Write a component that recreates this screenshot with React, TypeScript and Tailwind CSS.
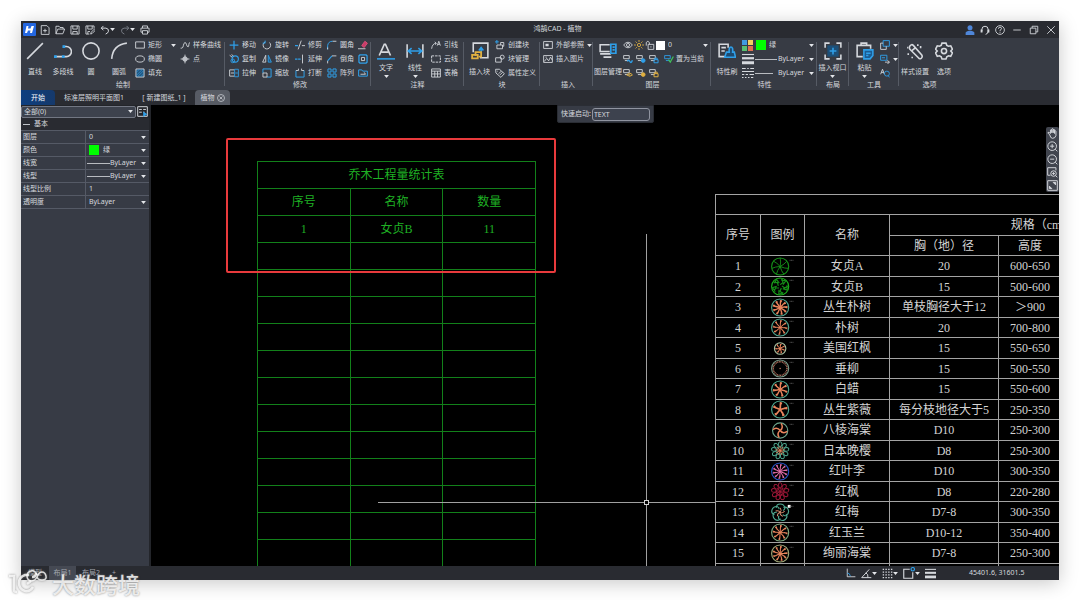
import type { ReactNode } from 'react';
import clsx from 'clsx';

const W = '#d6d9de';
const B = '#2f9fe8';
const Y = '#e0b040';

const CJK = 'font-[Noto_Sans,Noto_Sans_CJK_SC,sans-serif]';
const CAD = 'font-[Liberation_Serif,Noto_Sans_CJK_SC,serif]';

function Svg({ size = 'size-[10px]', children }: { size?: string; children: ReactNode }) {
  return (
    <svg viewBox="0 0 16 16" className={clsx('shrink-0', size)} fill="none" stroke={W} strokeWidth="1.4" aria-hidden="true">
      {children}
    </svg>
  );
}

function Caret() {
  return (
    <svg viewBox="0 0 8 5" className="w-[5px] h-[3px] shrink-0" aria-hidden="true">
      <path d="M0 0h8L4 5z" fill="#e4e6ea" />
    </svg>
  );
}

// stacked-layer glyph shared by the layer tools, with a badge in the corner
function LayerGlyph({ color, badge }: { color: string; badge: 'wave' | 'sun' | 'lock' | 'eye' | 'check' }) {
  return (
    <Svg>
      <path d="M1 2.500h9v5h-9zM3 10.500h6" stroke={badge === 'check' ? B : W} />
      {badge === 'wave' && <path d="M7 12q2-4 4 0t4-2" stroke={color} strokeWidth="2.200" />}
      {badge === 'sun' && <circle cx="11.500" cy="10.500" r="3" fill={color} stroke={color} />}
      {badge === 'lock' && <path d="M8 9h6.500v5H8zM9.500 9V6.500h3.500V9" stroke={color} strokeWidth="1.600" />}
      {badge === 'eye' && <path d="M6 11q5-5 9 0q-4 4.500-9 0zM10.500 10v2" stroke={color} strokeWidth="1.600" />}
      {badge === 'check' && <path d="M7 9l3 4 5-9" stroke="#3fc25a" strokeWidth="2" />}
    </Svg>
  );
}

const icons: Record<string, ReactNode> = {
  // quick access
  newFile: <path d="M2 1h9l3.500 3.500V15H2zM5 9h6M8 6v6" />,
  open: <path d="M1.500 14V2h5l1.500 2h5v2.500M1.500 14l3-7.500h11L12.500 14z" />,
  save: <path d="M1.500 1.500h13v13h-13zM4.500 1.500v5h7v-5M4.500 14.500v-4h7v4" />,
  saveAs: <path d="M14.500 6V1.500h-13v13H7M4.500 1.500v5h7v-5M4.500 14.500v-4H8M9 14.500l1-3 4.500-4.500 1.500 2-4.500 4.500z" />,
  undo: <path d="M5.500 1.500L2 5l3.500 3.500M2 5h7.500q5 1 4 5-.5 3-4.500 4.500" strokeWidth="1.600" />,
  redo: <path d="M10.500 1.500L14 5l-3.500 3.500M14 5H6.500q-5 1-4 5 .5 3 4.500 4.500" stroke="#777b84" strokeWidth="1.600" />,
  print: <path d="M4 5V1.500h8V5M4 11.500H1.500V5h13v6.500H12M4 9h8v5.500H4z" />,
  // draw
  line: <path d="M1 15L15 1" />,
  polyline: <><path d="M1 13h10a4.500 4.500 0 0 0 0-9H8" /><path d="M0 11.800h2.500v2.500H0zM7 11.800h2.500v2.500H7zM7.500 2.800H10v2.500H7.500z" fill={B} stroke="none" /></>,
  circle: <circle cx="8" cy="8" r="7.200" />,
  arc: <path d="M1.500 15Q2.500 2.500 15 1" />,
  rect: <path d="M1 3h14v10H1z" />,
  ellipse: <ellipse cx="8" cy="8" rx="7" ry="5" />,
  hatch: <><path d="M1.500 1.500h13v13h-13z" fill="#24577f" /><path d="M2 7l5-5M2 12L12 2M4 14L14 4M9 14l5-5" stroke={B} strokeWidth="1" /></>,
  spline: <path d="M1 13h2C6 13 5 4 8 4s2 7 5 7c2 0 0-7 3-7" />,
  point: <><circle cx="8" cy="8" r="3.500" fill="#8b8f98" /><path d="M8 1v14M1 8h14" /></>,
  // modify
  move: <path d="M8 1v14M1 8h14" stroke={B} strokeWidth="2" />,
  rotate: <><path d="M5 3a6 6 0 1 0 7 1" /><path d="M5 1v4H1" stroke={B} strokeWidth="1.600" /></>,
  trim: <><path d="M0 9h5" stroke={B} strokeWidth="2" /><path d="M10 1L5 15M11 9h5" /></>,
  fillet: <><path d="M1 15V9Q2 2 9 2" stroke={B} strokeWidth="1.600" /><path d="M9 2h6M1 15v-3" /></>,
  erase: <><path d="M6 9l5-7 4 3-5 7z" fill="#c83c68" stroke="#e0507c" /><path d="M0 14h12" /></>,
  copy: <><circle cx="10" cy="8" r="5" stroke={B} strokeWidth="1.800" /><circle cx="6" cy="11" r="3" stroke={B} /><path d="M1 2l4 3M4 1l3 2" /></>,
  mirror: <><path d="M6 2v11H1z" /><path d="M10 2v11h5z" stroke={B} fill="#24577f" /></>,
  extend: <><path d="M0 8h9" stroke={B} strokeWidth="2" strokeDasharray="4 1" /><path d="M12 1v14" /></>,
  chamfer: <><path d="M1 11L8 3" stroke={B} strokeWidth="1.800" /><path d="M8 3h7M1 15v-4" /></>,
  offset: <><path d="M3 1.500h10l1.500 1.500v10L13 14.500H3L1.500 13V3z" stroke={B} strokeWidth="2" /><path d="M5.500 5.500h5v5h-5z" /></>,
  stretch: <><path d="M9 3H1v10h8M3 8h5" /><path d="M9 2h6v12H9zM10 8h4" stroke={B} /></>,
  scale: <><path d="M1.500 8V1.500h13v13H8" stroke={B} strokeWidth="1.600" /><path d="M1.500 8h6.500v6.500H1.500z" /></>,
  breakAt: <><path d="M1.500 4v10.500h13V4" stroke={B} strokeWidth="1.600" /><path d="M1.500 4h4M10.500 4h4M5.500 1v3M10.500 1v3" /></>,
  array: <path d="M1.500 1.500h5v5h-5zM9.500 1.500h5v5h-5zM1.500 9.500h5v5h-5zM9.500 9.500h5v5h-5z" stroke={B} strokeWidth="1.600" />,
  group: <><path d="M1 13V3h5l1.500 2H15v8z" stroke={B} strokeWidth="1.600" /><path d="M4 10h8l-2-3" /></>,
  // annotate
  text: <><path d="M2 12L6.500 2h1L12 12M4 9h6" strokeWidth="1.500" /><path d="M0 15h16" stroke={B} /></>,
  linear: <><path d="M1 2v12M15 2v12" /><path d="M2 8h12M5 5.500L2 8l3 2.500M11 5.500L14 8l-3 2.500" stroke={B} /></>,
  leader: <><path d="M1 14Q2 6 8 5M6 3l2.500 2L7 7.500" /><path d="M10 9l2.500-7L15 9M11 7h3" /></>,
  cloud: <path d="M1 3h14v10H1z" strokeDasharray="4 1.500" strokeWidth="1.500" />,
  table: <path d="M1 1.500h14v13H1zM1 5h14M1 9.500h14M6 5v9.500M10.500 5v9.500" />,
  // block
  insertBlock: <><path d="M8 14h7V1H2v8" /><path d="M9 10V5M7 7.500L9 5l2 2.500" stroke={B} /><path d="M1 11.500h5v3H1zM4 12.500V9h5v4H7" stroke={Y} strokeWidth="1.600" /></>,
  makeBlock: <><path d="M3 0v6M0 3h6" stroke={B} strokeWidth="1.600" /><path d="M3 8v6h9V8zM9 8V4h5v6h-2" /></>,
  manageBlock: <><path d="M1 6h9v7H1z" /><circle cx="11.500" cy="5" r="3.200" /></>,
  tag: <path d="M1 2h6l8 7-5.500 6L1.500 8zM4 4.500v1M6 9l4-4M8 11l4-4" />,
  xref: <><path d="M1 2.500h14v11H1z" /><path d="M4 6h5v4H4z" fill={W} stroke="none" /></>,
  image: <path d="M1 2.500h14v11H1zM2 12l4-5 3 4 3-6 3 5M4 5h2" />,
  // layer
  layers: <><path d="M9.500 2.500H1v6h8.500" /><path d="M1 10.500h9.500M4 13.500h7" strokeWidth="1.600" /><path d="M10.500 2H15v8h-4.500zM12 4.500h2M12 7h2" stroke={B} strokeWidth="1.500" /></>,
  eye: <><path d="M1 8q7-9 14 0q-7 9-14 0z" /><circle cx="8" cy="8" r="2.500" /></>,
  sun: <><circle cx="8" cy="8" r="2.600" stroke={Y} /><path d="M8 0v3M8 13v3M0 8h3M13 8h3M2.500 2.500l2 2M11.500 11.500l2 2M13.500 2.500l-2 2M2.500 13.500l2-2" stroke={Y} /></>,
  unlock: <path d="M5 7h9v8H5zM2 9V4q2.500-4 5 0v3M9.500 10v2" />,
  // properties
  match: <><path d="M7 13H1V2h8v3M3 5h4M3 8h3" /><path d="M6 13.500l1.500-4.500H10q-.5-4.500 1.500-4.500T13 9h1.500l1 4.500z" stroke={B} fill="#1d4a70" /></>,
  weights: <><path d="M0 2h16" strokeWidth="1.500" /><path d="M0 7h16" strokeWidth="3" /><path d="M0 13h16" strokeWidth="4" /></>,
  types: <path d="M0 2h5M7 2h2M11 2h5M0 6h16M0 10h3M5 10h3M10 10h6M0 14h2M4 14h2M8 14h2M12 14h3" strokeWidth="1.500" />,
  // layout + tools
  viewport: <><path d="M3 3h10v10H3z" fill="#1c4f78" stroke="none" /><path d="M1 5V1h4M11 1h4v4M15 11v4h-4M5 15H1v-4" /><path d="M8 5v6M5 8h6" stroke={B} /></>,
  paste: <><path d="M6 13H1V3h12v3M4.500 3V1h5v2" /><path d="M7 7h8v5l-2.500 3H7zM9 10h4M9 12h2" stroke={B} fill="#1b5c92" /></>,
  duplicate: <><path d="M5 1h10v9H5z" stroke={B} strokeWidth="1.500" /><path d="M5 5H1v10h9v-5" /></>,
  quickCopy: <><path d="M1 2h10v8H1zM3 6h5" stroke={B} strokeWidth="1.500" /><path d="M8 13h7M12 10l3 3-3 3" /></>,
  find: <><path d="M1 10l3-8 3 8M2 7h4" /><circle cx="11" cy="9" r="4" stroke={B} /><path d="M13 12l2 3" stroke={B} /></>,
  wand: <><path d="M3.500 3.500q1.500-2 3-.5l7.500 8.500q1 2-.5 3t-2.500-.5L3.500 6.500q-1-1.500 0-3zM5.500 7.500l3-2.500" /><path d="M10.500 2v1.500M2 10v1.500M5.500 13v1.500M13 3.500v2M1 5h1" /></>,
  gear: <><path d="M6.200 1h3.600l.7 2 1.500.8 2-.4 1.500 3L14 8l1.500 1.700-1.500 3-2-.4-1.500.8-.7 2H6.200l-.7-2-1.500-.8-2 .4-1.500-3L2 8 .5 6.400l1.500-3 2 .4L5.500 3z" /><circle cx="8" cy="8" r="2.300" /></>,
  // status bar
  ortho: <><path d="M2 1v13h13" /><path d="M2 8q4 0 5 5" stroke={B} /></>,
  polar: <path d="M1 14L12 2M1 14h14M7 7q4 2 3 7" />,
  snap: <path d="M1 2h15M1 6h15M1 10h15M1 14h15" strokeWidth="2" strokeDasharray="2 2" />,
  osnap: <><path d="M9 3H1v12h12V7" strokeWidth="1.500" /><circle cx="13" cy="3" r="2.300" stroke={B} strokeWidth="1.500" /></>,
  // canvas navigation
  pan: <path d="M4 10L1.500 7.500Q1 5.500 3 6.500L5 8V3q1-1.500 2 0v4V1.500q1-1.500 2 0V7 2.500q1-1.500 2 0V8 4.500q1-1.500 2 0V11q-1 4-5 4-3 0-4-5z" />,
  zoomIn: <><circle cx="7.500" cy="7.500" r="6.300" /><path d="M12 12l3 3M4.500 7.500h6M7.500 4.500v6" /></>,
  zoomOut: <><circle cx="7.500" cy="7.500" r="6.300" /><path d="M12 12l3 3M4.500 7.500h6" /></>,
  zoomWindow: <><path d="M5 12H1V1h12v4" /><circle cx="9.500" cy="9.500" r="4" /><path d="M12.500 12.500L15 15M7.500 9.500h4M9.500 7.500v4" /></>,
  extents: <><path d="M1 1h14v14H1z" /><path d="M9 3.500h3.500V7zM7 12.500H3.500V9z" fill={W} /></>,
};

function Icon({ name, size }: { name: string; size?: string }) {
  return <Svg size={size}>{icons[name]}</Svg>;
}

function Big({ icon, label, menu, width = 'w-7' }: { icon: string; label: string; menu?: boolean; width?: string }) {
  return (
    <button className={clsx('flex flex-col items-center shrink-0 h-[42px] pt-1 whitespace-nowrap', width)}>
      <Icon name={icon} size="size-[18px]" />
      <span className={clsx('leading-[9px]', menu ? 'mt-[3px] mb-[3px]' : 'mt-[7px]')}>{label}</span>
      {menu && <Caret />}
    </button>
  );
}

function Small({ icon, label, menu }: { icon: string; label?: string; menu?: boolean }) {
  return (
    <button className="flex items-center gap-[3px] h-[14px] whitespace-nowrap" aria-label={label ?? icon}>
      <Icon name={icon} />
      {label && <span>{label}</span>}
      {menu && <Caret />}
    </button>
  );
}

function Stack({ items, width }: { items: [string, string?][]; width?: string }) {
  return (
    <div className={clsx('flex flex-col shrink-0', width)}>
      {items.map(([icon, label]) => (
        <Small key={icon} icon={icon} label={label} />
      ))}
    </div>
  );
}

function Group({ title, width, last, children }: { title: string; width: string; last?: boolean; children: ReactNode }) {
  return (
    <section className={clsx('relative flex flex-col shrink-0 h-[52px]', width)}>
      <div className="flex h-[42px]">{children}</div>
      <h2 className="text-center leading-[9px]">{title}</h2>
      {!last && <span className="absolute right-0 top-1 bottom-1 w-px bg-[#565b65]" />}
    </section>
  );
}

function Pick({ label, value, className }: { label: string; value: string; className?: string }) {
  return (
    <span className={clsx('flex items-center gap-1 min-w-0', className)}>
      <select aria-label={label} className="appearance-none bg-transparent outline-none flex-1 min-w-0 leading-[10px]">
        <option>{value}</option>
      </select>
      <Caret />
    </span>
  );
}

function TitleBar() {
  return (
    <header className="flex items-center h-[17px] pl-[2px] pr-[3px] bg-[#292b31] shrink-0">
      <svg viewBox="0 0 13 13" className="size-[13px]" aria-hidden="true">
        <rect width="13" height="13" rx="1" fill="#2467e0" />
        <path d="M3.500 3h2L5 5.500h2.500L8.500 3h2.500L9 10H7l.5-2.500H5L4 10H2z" fill="#fff" />
      </svg>
      <div className="flex items-center gap-[5px] ml-1">
        {['newFile', 'open', 'save', 'saveAs'].map((n) => (
          <button key={n} aria-label={n}><Icon name={n} /></button>
        ))}
        <button aria-label="undo" className="flex items-center"><Icon name="undo" /><Caret /></button>
        <button aria-label="redo" className="flex items-center"><Icon name="redo" /><Caret /></button>
        <button aria-label="print"><Icon name="print" /></button>
      </div>
      <h1 className="flex-1 text-center">鸿鹄CAD - 植物</h1>
      <div className="flex items-center gap-[5px]">
        <button aria-label="user">
          <Svg><circle cx="8" cy="4.500" r="4" fill="#4f86d8" stroke="none" /><path d="M1 16v-4q1-2 5-3h4q4 1 5 3v4z" fill="#4f86d8" stroke="none" /></Svg>
        </button>
        <button aria-label="support">
          <Svg><path d="M3 10V7a5 5 0 0 1 10 0v3q0 4-4 5" strokeWidth="1.600" /><path d="M1 7h3v5H1zM12 7h3v5h-3z" fill={W} stroke="none" /></Svg>
        </button>
        <button aria-label="help">
          <Svg><circle cx="8" cy="8" r="7" /><path d="M5.500 6q0-2.500 2.500-2.500T10.500 6Q10 7.500 8 8.500v1.500M8 11.500v1.500" /></Svg>
        </button>
        <button aria-label="minimize" className="ml-[2px]"><Svg><path d="M2 8h12" /></Svg></button>
        <button aria-label="restore" className="ml-[2px]"><Svg><path d="M2 5h9v9H2zM5 5V2h9v9h-3" /></Svg></button>
        <button aria-label="close" className="ml-[2px]"><Svg><path d="M2 2l12 12M14 2L2 14" /></Svg></button>
      </div>
    </header>
  );
}

function Ribbon() {
  return (
    <div className="flex bg-[#373b44] overflow-hidden shrink-0">
      <Group title="绘制" width="w-[204px]">
        <Big icon="line" label="直线" />
        <Big icon="polyline" label="多段线" />
        <Big icon="circle" label="圆" />
        <Big icon="arc" label="圆弧" />
        <Stack width="w-[36px] pl-[2px]" items={[['rect', '矩形'], ['ellipse', '椭圆'], ['hatch', '填充']]} />
        <button aria-label="more" className="flex items-center h-[14px] pl-[2px] pr-1"><Caret /></button>
        <Stack items={[['spline', '样条曲线'], ['point', '点']]} />
      </Group>
      <Group title="修改" width="w-[146px] pl-1">
        <Stack width="w-[33px]" items={[['move', '移动'], ['copy', '复制'], ['stretch', '拉伸']]} />
        <Stack width="w-[33px]" items={[['rotate', '旋转'], ['mirror', '镜像'], ['scale', '缩放']]} />
        <Stack width="w-8" items={[['trim', '修剪'], ['extend', '延伸'], ['breakAt', '打断']]} />
        <Stack width="w-[31px]" items={[['fillet', '圆角'], ['chamfer', '倒角'], ['array', '阵列']]} />
        <Stack items={[['erase'], ['offset'], ['group']]} />
      </Group>
      <Group title="注释" width="w-[93px]">
        <Big icon="text" label="文字" menu width="w-[30px]" />
        <Big icon="linear" label="线性" menu />
        <Stack width="pl-[2px]" items={[['leader', '引线'], ['cloud', '云线'], ['table', '表格']]} />
      </Group>
      <Group title="块" width="w-[76px]">
        <Big icon="insertBlock" label="插入块" width="w-[31px]" />
        <Stack items={[['makeBlock', '创建块'], ['manageBlock', '块管理'], ['tag', '属性定义']]} />
      </Group>
      <Group title="插入" width="w-[53px] pl-[3px]">
        <div className="flex flex-col">
          <Small icon="xref" label="外部参照" menu />
          <Small icon="image" label="插入图片" />
        </div>
      </Group>
      <Group title="图层" width="w-[118px] pl-[1px]">
        <Big icon="layers" label="图层管理" />
        <div className="flex flex-col flex-1 pl-[1px] pr-[3px]">
          <div className="flex items-center gap-[1px] h-[14px]">
            <Icon name="eye" />
            <Icon name="sun" />
            <Icon name="unlock" />
            <span className="size-[9px] bg-white" />
            <Pick label="图层" value="0" className="flex-1 pl-[2px]" />
          </div>
          <div className="flex items-center gap-[3px] h-[14px]">
            <LayerGlyph color={B} badge="wave" />
            <LayerGlyph color={B} badge="sun" />
            <LayerGlyph color={B} badge="lock" />
            <button className="flex items-center gap-[2px] whitespace-nowrap pl-[2px]">
              <LayerGlyph color={B} badge="check" />
              置为当前
            </button>
          </div>
          <div className="flex items-center gap-[3px] h-[14px]">
            <LayerGlyph color={Y} badge="eye" />
            <LayerGlyph color={Y} badge="sun" />
            <LayerGlyph color={Y} badge="lock" />
          </div>
        </div>
      </Group>
      <Group title="特性" width="w-[106px] pl-[1px]">
        <Big icon="match" label="特性刷" width="w-[30px]" />
        <div className="flex flex-col flex-1 pr-[3px]">
          <div className="flex items-center gap-[3px] h-[14px]">
            <svg viewBox="0 0 11 11" className="size-[11px]" aria-hidden="true">
              <path d="M0 0h5v5H0z" fill="#3f9be0" />
              <path d="M6 0h5v5H6z" fill="#f0d060" />
              <path d="M0 6h5v5H0z" fill="#58c070" />
              <path d="M6 6h5v5H6z" fill="#e07050" />
            </svg>
            <span className="size-[10px] bg-[#00ff00]" />
            <Pick label="颜色" value="绿" className="flex-1" />
          </div>
          <div className="flex items-center gap-[1px] h-[14px]">
            <Icon name="weights" size="size-3" />
            <span className="flex-1 h-px bg-[#b8bbc0]" />
            <Pick label="线宽" value="ByLayer" />
          </div>
          <div className="flex items-center gap-[1px] h-[14px]">
            <Icon name="types" size="size-3" />
            <span className="flex-1 h-px mr-1 bg-[#b8bbc0]" />
            <Pick label="线型" value="ByLayer" />
          </div>
        </div>
      </Group>
      <Group title="布局" width="w-8">
        <Big icon="viewport" label="插入视口" menu width="w-[31px]" />
      </Group>
      <Group title="工具" width="w-[50px]">
        <Big icon="paste" label="粘贴" menu width="w-[31px]" />
        <div className="flex flex-col">
          <Small icon="duplicate" menu />
          <Small icon="quickCopy" menu />
          <Small icon="find" />
        </div>
      </Group>
      <Group title="选项" width="w-[60px] pl-[1px]" last>
        <Big icon="wand" label="样式设置" width="w-[30px]" />
        <Big icon="gear" label="选项" />
      </Group>
    </div>
  );
}

function FileTabs() {
  return (
    <nav className="flex h-[15px] shrink-0 bg-[#2a2c32] leading-[15px] whitespace-nowrap">
      <button className="w-[34px] bg-linear-to-r from-[#0d3f80] to-[#15396b] rounded-tr-[4px] text-white">开始</button>
      <button className="w-[78px]">标准层照明平面图1</button>
      <button className="w-[62px]">[ 新建图纸_1 ]</button>
      <button className="flex items-center justify-center gap-[2px] w-[35px] bg-[#575b64] rounded-t-[4px]">
        植物
        <Svg size="size-2"><circle cx="8" cy="8" r="7" /><path d="M5 5l6 6M11 5l-6 6" /></Svg>
      </button>
    </nav>
  );
}

const properties: { name: string; value: string; kind?: 'color' | 'line' | 'text' }[] = [
  { name: '图层', value: '0' },
  { name: '颜色', value: '绿', kind: 'color' },
  { name: '线宽', value: 'ByLayer', kind: 'line' },
  { name: '线型', value: 'ByLayer', kind: 'line' },
  { name: '线型比例', value: '1', kind: 'text' },
  { name: '透明度', value: 'ByLayer' },
];

function PropertyPanel() {
  return (
    <aside className="flex flex-col w-[130px] shrink-0 border-r-2 border-[#23252a] bg-[#373b45]">
      <div className="flex items-center h-[13px] bg-[#23252a]">
        <Pick label="选择集" value="全部(0)" className="flex-1 h-3 pl-[2px] pr-[2px] rounded-[2px] border border-[#727783] bg-[#3d424d]" />
        <button aria-label="快速选择" className="flex items-center justify-center w-[13px]">
          <Svg size="size-[11px]"><path d="M1 1h14v14H1zM3 5h4M3 9h4M9 5h4M9 9h2" /><path d="M9 8l6 4-6 4z" fill={B} stroke="none" /></Svg>
        </button>
      </div>
      <h3 className="flex items-center gap-1 h-3 pl-[2px] bg-[#292b31]">
        <span className="w-[7px] h-px bg-[#c0c3c8]" />
        基本
      </h3>
      <dl className="border-t border-[#555a66]">
        {properties.map((p) => (
          <div key={p.name} className="flex h-[13px] border-b border-[#555a66] leading-3">
            <dt className="w-[65px] pl-[2px] border-r border-[#555a66]">{p.name}</dt>
            <dd className={clsx('flex flex-1 items-center min-w-0 pr-[3px]', p.kind === 'line' ? 'pl-[1px]' : 'gap-[3px] pl-[2px]')}>
              {p.kind === 'color' && <span className="size-[10px] ml-[1px] bg-[#00ff00]" />}
              {p.kind === 'line' && <span className="flex-1 h-px bg-[#b8bbc0]" />}
              {p.kind === 'text' ? (
                <input aria-label={p.name} defaultValue={p.value} className="w-full pl-[1px] bg-transparent outline-none" />
              ) : (
                <Pick label={p.name} value={p.value} className={p.kind === 'line' ? '' : 'flex-1 pl-[1px]'} />
              )}
            </dd>
          </div>
        ))}
      </dl>
    </aside>
  );
}

const summaryRows = [
  ['序号', '名称', '数量'],
  ['1', '女贞B', '11'],
  ...Array.from({ length: 13 }, () => ['', '', '']),
];

function SummaryTable() {
  return (
    <table className={clsx('absolute left-[106px] top-14 w-[279px] table-fixed border-collapse text-[12px] leading-none text-[#1fb024] text-center', CAD)}>
      <tbody>
        <tr className="h-[27px]">
          <th colSpan={3} className="p-0 border border-[#12801a] font-normal">乔木工程量统计表</th>
        </tr>
        {summaryRows.map((row, i) => (
          <tr key={i} className="h-[27px]">
            {row.map((cell, j) => (
              <td key={j} className="p-0 border border-[#12801a]">{cell}</td>
            ))}
          </tr>
        ))}
      </tbody>
    </table>
  );
}

interface Plant {
  name: string;
  trunk: string;
  height: string;
  ring: string;
  ink: string;
  shape: 'branch' | 'bush' | 'spokes' | 'ring' | 'swirl' | 'petals' | 'blossom';
  n: number;
  r?: number;
  weight?: number;
}

const TEAL = '#4fa890';
const CORAL = '#e8845c';

const plants: Plant[] = [
  { name: '女贞A', trunk: '20', height: '600-650', ring: '#159018', ink: '#159018', shape: 'branch', n: 7, weight: 0.9 },
  { name: '女贞B', trunk: '15', height: '500-600', ring: '#1cb01c', ink: '#159018', shape: 'bush', n: 5, weight: 1.2 },
  { name: '丛生朴树', trunk: '单枝胸径大于12', height: '＞900', ring: TEAL, ink: CORAL, shape: 'spokes', n: 9, weight: 1.4 },
  { name: '朴树', trunk: '20', height: '700-800', ring: TEAL, ink: CORAL, shape: 'spokes', n: 8, weight: 1 },
  { name: '美国红枫', trunk: '15', height: '550-650', ring: '#a8c0a0', ink: CORAL, shape: 'spokes', n: 7, r: 6, weight: 1 },
  { name: '垂柳', trunk: '15', height: '500-550', ring: '#7b9a88', ink: '#c07a64', shape: 'ring', n: 30 },
  { name: '白蜡', trunk: '15', height: '550-600', ring: TEAL, ink: CORAL, shape: 'spokes', n: 7, weight: 1.5 },
  { name: '丛生紫薇', trunk: '每分枝地径大于5', height: '250-350', ring: TEAL, ink: CORAL, shape: 'spokes', n: 5, weight: 1.8 },
  { name: '八棱海棠', trunk: 'D10', height: '250-300', ring: '#6da58c', ink: CORAL, shape: 'swirl', n: 4, r: 8, weight: 1.6 },
  { name: '日本晚樱', trunk: 'D8', height: '250-300', ring: TEAL, ink: CORAL, shape: 'petals', n: 9 },
  { name: '红叶李', trunk: 'D10', height: '300-350', ring: '#2855c8', ink: '#e06ca8', shape: 'spokes', n: 10, weight: 1 },
  { name: '红枫', trunk: 'D8', height: '220-280', ring: '#a01838', ink: '#a01838', shape: 'petals', n: 9 },
  { name: '红梅', trunk: 'D7-8', height: '300-350', ring: TEAL, ink: '#d89070', shape: 'blossom', n: 5 },
  { name: '红玉兰', trunk: 'D10-12', height: '350-400', ring: '#80aa80', ink: CORAL, shape: 'spokes', n: 8, weight: 1.1 },
  { name: '绚丽海棠', trunk: 'D7-8', height: '250-300', ring: '#a0a878', ink: CORAL, shape: 'spokes', n: 9, weight: 1.1 },
];

// plan symbol of a tree: an outline with n branches turned round its centre
function TreeSymbol({ ring, ink, shape, n, r = 9, weight = 1 }: Plant) {
  const turns = Array.from({ length: n }, (_, i) => (i * 360) / n);
  const outlined = shape !== 'petals' && shape !== 'blossom';
  return (
    <svg viewBox="-10 -10 26 20" className="w-[26px] h-[19px] ml-[9px]" fill="none" stroke={ink} strokeWidth={weight} aria-hidden="true">
      {outlined && <circle r={r} stroke={ring} strokeWidth="1.200" />}
      {shape === 'ring' && <circle r={r - 1.8} stroke={ink} strokeWidth="1.500" strokeDasharray="1 0.7" />}
      {shape === 'ring' && <circle r="0.800" fill={ink} stroke="none" />}
      {shape !== 'ring' && turns.map((a) => (
        <g key={a} transform={`rotate(${a})`}>
          {shape === 'spokes' && <path d={`M0 0L0.500 ${-r + 1.2}M0 ${-r / 2}l1.600 ${-r / 3}`} />}
          {shape === 'branch' && <path d="M0 0Q1 -5 0 -9" />}
          {shape === 'bush' && <path d="M0 -2l3 -2-1 -4M1 -7l5 1-3 4" />}
          {shape === 'swirl' && <path d="M0 0Q4 -3 1 -7.500" />}
          {shape === 'petals' && <path d="M0 -3Q-3 -6 -1.500 -8.500L0 -9.300 1.500 -8.500Q3 -6 0 -3" stroke={ring} />}
          {shape === 'petals' && <path d="M0 0V-5" strokeWidth="0.800" />}
          {shape === 'blossom' && <path d="M-4 -5Q-4 -9 0 -9T5 -5Q5 -3 3 -2" stroke={ring} strokeWidth="1.200" />}
          {shape === 'blossom' && <path d="M0 0Q2 -2 0 -5" />}
        </g>
      ))}
      {shape === 'blossom' && <path d="M8 -8h3v3H8z" fill="#fff" stroke="none" />}
      <path d="M10 -6.500h4" stroke="#6c6c6c" strokeWidth="0.800" strokeDasharray="1 0.5" />
    </svg>
  );
}

const cell = 'p-0 border border-[#a4a4a4] font-normal';

function PlantTable() {
  return (
    <table className={clsx('absolute left-[564px] top-[89px] w-[480px] table-fixed border-collapse text-[12px] leading-none text-[#d4d4d4] text-center', CAD)}>
      <colgroup>
        <col className="w-[45px]" />
        <col className="w-11" />
        <col className="w-[85px]" />
        <col className="w-[109px]" />
        <col className="w-[63px]" />
        <col />
      </colgroup>
      <thead>
        <tr className="h-5"><th colSpan={6} className={cell} /></tr>
        <tr className="h-[21px]">
          <th rowSpan={2} className={cell}>序号</th>
          <th rowSpan={2} className={cell}>图例</th>
          <th rowSpan={2} className={cell}>名称</th>
          <th colSpan={3} className={cell}>规格（cm）</th>
        </tr>
        <tr className="h-5">
          <th className={cell}>胸（地）径</th>
          <th className={cell}>高度</th>
          <th className={cell} />
        </tr>
      </thead>
      <tbody>
        {plants.map((p, i) => (
          <tr key={p.name} className={i % 2 ? 'h-5' : 'h-[21px]'}>
            <td className={cell}>{i + 1}</td>
            <td className={cell}><TreeSymbol {...p} /></td>
            <td className={cell}>{p.name}</td>
            <td className={cell}>{p.trunk}</td>
            <td className={cell}>{p.height}</td>
            <td className={cell} />
          </tr>
        ))}
        <tr className="h-5">
          {[0, 1, 2, 3, 4, 5].map((i) => <td key={i} className={cell} />)}
        </tr>
      </tbody>
    </table>
  );
}

function Canvas() {
  return (
    <main className="relative flex-1 min-w-0 overflow-hidden bg-black">
      <SummaryTable />
      <PlantTable />
      <div className="absolute left-[75px] top-[33px] w-[330px] h-[135px] border-2 border-[#e83a3c] rounded-[2px]" />

      <div className="absolute left-[495px] top-[129px] bottom-0 w-px bg-[#a0a0a0]" />
      <div className="absolute left-[227px] top-[397px] w-[337px] h-px bg-[#a0a0a0]" />
      <div className="absolute left-[493px] top-[395px] size-[5px] border border-[#d0d0d0] bg-black" />

      <label className="absolute left-[406px] top-0 flex items-center gap-[1px] w-[97px] h-[18px] pl-[3px] pr-[3px] bg-[#373b45] border border-[#2a2d34] rounded-b-[2px] whitespace-nowrap">
        快速启动:
        <input defaultValue="TEXT" className="flex-1 min-w-0 h-[13px] pl-[1px] rounded-[3px] border border-[#9094a0] bg-[#3d424e] outline-none" />
      </label>

      <div className="absolute right-0 top-[22px] flex flex-col w-[13px] bg-[#41454f] rounded-[2px]">
        {['pan', 'zoomIn', 'zoomOut', 'zoomWindow', 'extents'].map((n) => (
          <button key={n} aria-label={n} className="flex items-center justify-center h-[13px]">
            <Icon name={n} size="size-[11px]" />
          </button>
        ))}
      </div>
    </main>
  );
}

function StatusBar() {
  return (
    <footer className="flex items-center h-[14px] shrink-0 bg-[#292b31]">
      <div className="flex flex-1 leading-[14px] text-[#a4a8b0]">
        <button className="w-7">模型</button>
        <button className="w-[27px] bg-[#454953]">布局1</button>
        <button className="w-[30px]">布局2</button>
        <button className="w-4">+</button>
      </div>
      <div className="flex items-center gap-[5px] mr-[33px]">
        <button aria-label="正交"><Icon name="ortho" /></button>
        <button aria-label="极轴" className="flex items-center"><Icon name="polar" size="size-[11px]" /><Caret /></button>
        <button aria-label="栅格" className="flex items-center"><Icon name="snap" size="size-[11px]" /><Caret /></button>
        <button aria-label="捕捉" className="flex items-center"><Icon name="osnap" size="size-3" /><Caret /></button>
        <button aria-label="线宽"><Icon name="weights" size="size-[11px]" /></button>
      </div>
      <output className="w-[90px]">45401.6, 31601.5</output>
    </footer>
  );
}

// translucent publisher mark in the corner, laid over the whole page
function Watermark() {
  return (
    <div className="absolute left-2 bottom-1 flex items-end gap-1 text-white/80">
      <svg viewBox="0 0 40 28" className="w-10 h-7 drop-shadow-[0_0_1px_#777]" fill="none" stroke="currentColor" strokeWidth="2.500" aria-hidden="true">
        <path d="M1 8h5v14q0 2 3 2M25 19q-3 5-8 4-6-2-6-8t6-8h4" />
        <path d="M24 9q4 0 4-4M19 16l4-3" />
        <path d="M29 7q-2-5-6-4-4 1-4 5t4 5q4 0 6-4 2-5 5-5t4 4-4 4-5-4" strokeWidth="1.500" />
      </svg>
      <span className="text-[22px] leading-6 font-medium [text-shadow:0_0_2px_#777]">大数跨境</span>
    </div>
  );
}

export default function App() {
  return (
    <div className={clsx('relative flex h-screen px-[21px] pt-[21px] pb-5 bg-white text-[7px] text-[#d6d9de]', CJK)}>
      <div className="flex flex-col flex-1 min-w-0 overflow-hidden shadow-[0_3px_18px_rgba(0,0,0,0.22)]">
        <TitleBar />
        <Ribbon />
        <FileTabs />
        <div className="flex flex-1 min-h-0">
          <PropertyPanel />
          <Canvas />
        </div>
        <StatusBar />
      </div>
      <Watermark />
    </div>
  );
}
